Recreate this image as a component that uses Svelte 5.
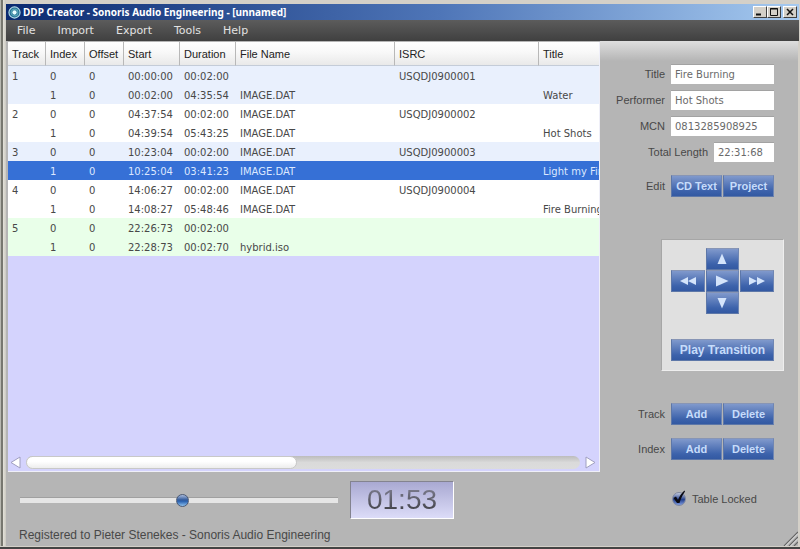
<script lang="ts">
  type Row = {
    track: string
    index: number
    offset: number
    start: string
    duration: string
    file: string
    isrc: string
    title: string
    tone: string
  }

  const columns = ['Track', 'Index', 'Offset', 'Start', 'Duration', 'File Name', 'ISRC', 'Title']
  const menus = ['File', 'Import', 'Export', 'Tools', 'Help']

  const rows: Row[] = [
    { track: '1', index: 0, offset: 0, start: '00:00:00', duration: '00:02:00', file: '', isrc: 'USQDJ0900001', title: '', tone: 'blue' },
    { track: '', index: 1, offset: 0, start: '00:02:00', duration: '04:35:54', file: 'IMAGE.DAT', isrc: '', title: 'Water', tone: 'blue' },
    { track: '2', index: 0, offset: 0, start: '04:37:54', duration: '00:02:00', file: 'IMAGE.DAT', isrc: 'USQDJ0900002', title: '', tone: 'white' },
    { track: '', index: 1, offset: 0, start: '04:39:54', duration: '05:43:25', file: 'IMAGE.DAT', isrc: '', title: 'Hot Shots', tone: 'white' },
    { track: '3', index: 0, offset: 0, start: '10:23:04', duration: '00:02:00', file: 'IMAGE.DAT', isrc: 'USQDJ0900003', title: '', tone: 'blue' },
    { track: '', index: 1, offset: 0, start: '10:25:04', duration: '03:41:23', file: 'IMAGE.DAT', isrc: '', title: 'Light my Fire', tone: 'blue' },
    { track: '4', index: 0, offset: 0, start: '14:06:27', duration: '00:02:00', file: 'IMAGE.DAT', isrc: 'USQDJ0900004', title: '', tone: 'white' },
    { track: '', index: 1, offset: 0, start: '14:08:27', duration: '05:48:46', file: 'IMAGE.DAT', isrc: '', title: 'Fire Burning', tone: 'white' },
    { track: '5', index: 0, offset: 0, start: '22:26:73', duration: '00:02:00', file: '', isrc: '', title: '', tone: 'green' },
    { track: '', index: 1, offset: 0, start: '22:28:73', duration: '00:02:70', file: 'hybrid.iso', isrc: '', title: '', tone: 'green' },
  ]

  let selected = $state(5)
  let position = $state(51)
  let locked = $state(true)
  let title = $state('Fire Burning')
  let performer = $state('Hot Shots')
  let mcn = $state('0813285908925')
  let total = $state('22:31:68')
</script>

<div class="window">
  <header class="titlebar">
    <svg class="logo" viewBox="0 0 14 14" aria-hidden="true">
      <circle cx="7" cy="7" r="6" fill="#246c96" stroke="#b4dce6" stroke-width="1.2" />
      <circle cx="7" cy="7" r="3.6" fill="none" stroke="#59a8b5" stroke-width="1.2" />
      <circle cx="7" cy="7" r="2.3" fill="#e9ffff" />
    </svg>
    <h1>DDP Creator - Sonoris Audio Engineering - [unnamed]</h1>
    <div class="controls">
      <button type="button" aria-label="Minimize">
        <svg viewBox="0 0 12 10"><path d="M2 7.5h5" stroke="#111" stroke-width="2" /></svg>
      </button>
      <button type="button" aria-label="Maximize">
        <svg viewBox="0 0 12 10"><path d="M2.5 1.5h7v7h-7zM2 2h8" fill="none" stroke="#111" /></svg>
      </button>
      <button class="close" type="button" aria-label="Close">
        <svg viewBox="0 0 12 10"><path d="M3 2l6 6M9 2l-6 6" stroke="#111" stroke-width="1.5" /></svg>
      </button>
    </div>
  </header>

  <nav class="menubar">
    {#each menus as menu}
      <button type="button">{menu}</button>
    {/each}
  </nav>

  <div class="body">
    <main>
      <div class="tracks">
        <div class="viewport">
          <table>
            <colgroup>
              <col class="w-track" />
              <col class="w-index" />
              <col class="w-index" />
              <col class="w-time" />
              <col class="w-time" />
              <col class="w-file" />
              <col class="w-isrc" />
              <col class="w-title" />
            </colgroup>
            <thead>
              <tr>
                {#each columns as column}
                  <th scope="col">{column}</th>
                {/each}
              </tr>
            </thead>
            <tbody>
              {#each rows as row, i}
                <tr class={row.tone} class:selected={selected === i} onclick={() => (selected = i)}>
                  <td>{row.track}</td>
                  <td>{row.index}</td>
                  <td>{row.offset}</td>
                  <td>{row.start}</td>
                  <td>{row.duration}</td>
                  <td>{row.file}</td>
                  <td>{row.isrc}</td>
                  <td>{row.title}</td>
                </tr>
              {/each}
            </tbody>
          </table>
        </div>
        <div class="scrollbar">
          <button type="button" aria-label="Scroll left">
            <svg viewBox="0 0 11 12"><path d="M10 0.500v11L1 6z" fill="#fff" stroke="#a09fc0" /></svg>
          </button>
          <div class="groove"><div class="grip"></div></div>
          <button type="button" aria-label="Scroll right">
            <svg viewBox="0 0 11 12"><path d="M1 0.500v11L10 6z" fill="#fff" stroke="#a09fc0" /></svg>
          </button>
        </div>
      </div>

      <div class="transport">
        <input class="seek" type="range" min="0" max="100" aria-label="Position" bind:value={position} />
        <output class="clock"><span>01:53</span></output>
      </div>
      <p class="registered">Registered to Pieter Stenekes - Sonoris Audio Engineering</p>
    </main>

    <aside>
      <div class="fields">
        <div class="field">
          <label for="title">Title</label>
          <input id="title" type="text" bind:value={title} />
        </div>
        <div class="field">
          <label for="performer">Performer</label>
          <input id="performer" type="text" bind:value={performer} />
        </div>
        <div class="field">
          <label for="mcn">MCN</label>
          <input id="mcn" type="text" bind:value={mcn} />
        </div>
        <div class="field">
          <label for="total">Total Length</label>
          <input id="total" class="short" type="text" bind:value={total} />
        </div>
      </div>

      <div class="field edit">
        <span>Edit</span>
        <div class="pair">
          <button class="btn" type="button">CD Text</button>
          <button class="btn" type="button">Project</button>
        </div>
      </div>

      <div class="player">
        <div class="pad">
          <button class="btn up" type="button" aria-label="Previous index">
            <svg viewBox="0 0 16 12"><path d="M8 0.500L12.500 11h-9z" /></svg>
          </button>
          <button class="btn rewind" type="button" aria-label="Rewind">
            <svg viewBox="0 0 16 12"><path d="M8 2v8L0 6zM16 2v8L8 6z" /></svg>
          </button>
          <button class="btn" type="button" aria-label="Play">
            <svg viewBox="0 0 16 12"><path d="M2 0.500v11L14.500 6z" /></svg>
          </button>
          <button class="btn" type="button" aria-label="Fast forward">
            <svg viewBox="0 0 16 12"><path d="M0 2v8l8-4zM8 2v8l8-4z" /></svg>
          </button>
          <button class="btn down" type="button" aria-label="Next index">
            <svg viewBox="0 0 16 12"><path d="M8 11.500L12.500 1h-9z" /></svg>
          </button>
        </div>
        <button class="btn wide" type="button">Play Transition</button>
      </div>

      <div class="lists">
        <div class="field">
          <span>Track</span>
          <div class="pair">
            <button class="btn" type="button">Add</button>
            <button class="btn" type="button">Delete</button>
          </div>
        </div>
        <div class="field">
          <span>Index</span>
          <div class="pair">
            <button class="btn" type="button">Add</button>
            <button class="btn" type="button">Delete</button>
          </div>
        </div>
      </div>

      <label class="lock">
        <span class="box">
          <input type="checkbox" bind:checked={locked} />
          {#if locked}
            <svg viewBox="0 0 14 16" aria-hidden="true">
              <path d="M1.500 8L4 6.500l2 3.500C7.500 6 9.500 3 12.500 0.500L13 1.500C10.500 5 8.500 9.500 7.500 13H5z" fill="#0a0a14" />
            </svg>
          {/if}
        </span>
        Table Locked
      </label>

      <svg class="resize" viewBox="0 0 15 15" aria-hidden="true">
        <path d="M1 15L15 1M6 15l9-9M11 15l4-4" stroke="#666" stroke-width="1.2" />
        <path d="M2.500 15L15 2.500M7.500 15l7.500-7.500" stroke="#e4e4e4" />
      </svg>
    </aside>
  </div>
</div>

<style>
  :global(body) {
    margin: 0;
    background: #b5b5b5;
  }

  .window {
    display: flex;
    flex-direction: column;
    min-height: 100vh;
    box-sizing: border-box;
    padding: 4px 1px 3px 6px;
    background:
      linear-gradient(0deg, #444 2px, #d4d0c8 2px, #d4d0c8 3px, transparent 3px),
      linear-gradient(90deg, #b8b8b0 1px, #77776f 1px, #77776f 3px, #e4e2da 3px, #cbc9c1 6px, transparent 6px),
      #d4d0c8;
    color: #484848;
    font-family: 'Liberation Sans', Arial, sans-serif;
    font-size: 11px;
  }

  button,
  input {
    margin: 0;
    padding: 0;
    border: 0;
    border-radius: 0;
    font: inherit;
    color: inherit;
    box-sizing: border-box;
  }

  .titlebar {
    display: flex;
    align-items: center;
    height: 16px;
    padding: 0 2px 0 2px;
    background: linear-gradient(90deg, #0b2a70, #4f76b8 55%, #a6caf0);
  }

  .logo {
    width: 13px;
    height: 13px;
  }

  h1 {
    flex: 1;
    margin: 0 0 0 2px;
    color: #fff;
    font-family: 'Noto Sans', 'Open Sans', sans-serif;
    font-size: 10px;
    line-height: 14px;
    font-weight: 700;
    white-space: nowrap;
  }

  .controls {
    display: flex;
  }

  .controls button {
    display: flex;
    width: 14px;
    height: 12px;
    background: #d4d0c8;
    border: 1px solid;
    border-color: #fff #404040 #404040 #fff;
  }

  .controls svg {
    width: 12px;
    height: 10px;
  }

  .controls .close {
    margin-left: 2px;
  }

  .menubar {
    display: flex;
    gap: 22px;
    height: 21px;
    padding: 0 11px;
    background: linear-gradient(#5c5c5c, #404040);
  }

  .menubar button {
    background: none;
    color: #e2e2e2;
    font-family: 'DejaVu Sans', Verdana, sans-serif;
    font-size: 11px;
  }

  .body {
    flex: 1;
    display: grid;
    grid-template-columns: minmax(0, 1fr) 199px;
    background: #b5b5b5;
  }

  main {
    display: flex;
    flex-direction: column;
    padding: 1px 0 3px 2px;
  }

  .tracks {
    flex: 1;
    display: flex;
    flex-direction: column;
    background: #d4d3fd;
    border-bottom: 1px solid #efeff8;
    border-right: 1px solid #efeff8;
  }

  .viewport {
    flex: 1;
    overflow: hidden;
  }

  table {
    width: 1200px;
    table-layout: fixed;
    border-collapse: separate;
    border-spacing: 0;
  }

  .w-track {
    width: 38px;
  }

  .w-index {
    width: 39px;
  }

  .w-time {
    width: 56px;
  }

  .w-file {
    width: 159px;
  }

  .w-isrc {
    width: 144px;
  }

  th {
    height: 24px;
    padding: 0 0 0 4px;
    box-sizing: border-box;
    background: linear-gradient(#fff, #f8f8f8 45%, #e9e9e9);
    border-right: 1px solid #b8b8b8;
    border-bottom: 1px solid #c4ccd8;
    color: #222;
    font-weight: 400;
    text-align: left;
  }

  td {
    height: 19px;
    padding: 2px 0 0 4px;
    box-sizing: border-box;
    font-family: 'DejaVu Sans', Verdana, sans-serif;
    font-size: 10px;
    line-height: 17px;
    white-space: nowrap;
  }

  .blue {
    background: #e9f0fd;
  }

  .white {
    background: #fff;
  }

  .green {
    background: #e9ffe9;
  }

  .selected {
    background: #3670d6;
    color: #dce8ff;
  }

  .scrollbar {
    display: flex;
    align-items: center;
    gap: 5px;
    height: 17px;
    padding: 0 3px 0 2px;
  }

  .scrollbar button {
    display: flex;
    background: none;
  }

  .scrollbar svg {
    width: 11px;
    height: 13px;
  }

  .groove {
    flex: 1;
    height: 13px;
    border-radius: 7px;
    background: linear-gradient(#bcbcbc, #dadada 50%, #dcdcdc);
  }

  .grip {
    width: 49%;
    height: 13px;
    box-sizing: border-box;
    border: 1px solid #c8c8c8;
    border-radius: 7px;
    background: linear-gradient(#fff 40%, #ededed);
  }

  .transport {
    display: flex;
    align-items: center;
    gap: 12px;
    padding: 9px 146px 8px 12px;
  }

  .seek {
    flex: 1;
    min-width: 0;
    height: 14px;
    appearance: none;
    background: none;
  }

  .seek::-webkit-slider-runnable-track {
    height: 6px;
    background: #e6e6e6;
    border-top: 1px solid #a0a0a0;
  }

  .seek::-webkit-slider-thumb {
    appearance: none;
    width: 13px;
    height: 13px;
    margin-top: -4px;
    box-sizing: border-box;
    border: 1px solid #4c5a75;
    border-radius: 50%;
    background: linear-gradient(#a9bbdc, #315a9c 45%, #2f67b4 60%, #8fc2ef);
  }

  .clock {
    width: 104px;
    height: 38px;
    box-sizing: border-box;
    border: 1px solid;
    border-color: #83838f #fff #fff #83838f;
    background: linear-gradient(#a9a9d2, #dcdcf8);
    font-size: 28px;
    line-height: 36px;
    text-align: center;
  }

  .clock span {
    background: linear-gradient(#85859a, #48484f 80%);
    background-clip: text;
    color: transparent;
  }

  .registered {
    margin: 0;
    padding-left: 11px;
    font-size: 12px;
    line-height: 16px;
  }

  aside {
    position: relative;
    display: flex;
    flex-direction: column;
    padding: 23px 24px 0 0;
    background: linear-gradient(#dedede, #b5b5b5 20px);
    border-right: 1px solid #d4d0c8;
  }

  .fields {
    display: flex;
    flex-direction: column;
    gap: 6px;
  }

  .field {
    display: flex;
    align-items: center;
    justify-content: flex-end;
    gap: 6px;
  }

  .field input {
    width: 103px;
    height: 20px;
    padding: 0 4px;
    background: #fff;
    color: #6a6a6a;
    border-top: 1px solid #a2a2a2;
    font-family: 'DejaVu Sans', Verdana, sans-serif;
    font-size: 10px;
  }

  .field .short {
    width: 60px;
  }

  .pair {
    display: flex;
    gap: 1px;
    width: 103px;
  }

  .btn {
    display: flex;
    flex: 1;
    align-items: center;
    justify-content: center;
    height: 22px;
    border: 1px solid;
    border-color: #8795b5 #6f86b3 #5d77a8 #5d77a8;
    background: linear-gradient(#8099cc, #3c62ab 75%, #3359a2);
    color: #c6dcfb;
    font-weight: 700;
  }

  .btn svg {
    width: 16px;
    height: 12px;
    fill: #d4e4fb;
  }

  .edit {
    margin-top: 13px;
  }

  .player {
    align-self: flex-end;
    width: 123px;
    height: 132px;
    box-sizing: border-box;
    margin: 42px -10px 0 0;
    padding: 8px 9px;
    background: #e0e0e0;
    border: 1px solid;
    border-color: #a6a6a6 #eee #eee #a6a6a6;
  }

  .pad {
    display: grid;
    grid-template-columns: repeat(3, 1fr);
    column-gap: 1px;
  }

  .up,
  .down {
    grid-column: 2;
  }

  .rewind {
    grid-column: 1;
  }

  .wide {
    width: 100%;
    margin-top: 25px;
    font-size: 12px;
  }

  .lists {
    display: flex;
    flex-direction: column;
    gap: 13px;
    margin-top: 32px;
  }

  .lock {
    display: flex;
    align-items: center;
    gap: 6px;
    margin: 32px 0 0 72px;
  }

  .box {
    position: relative;
    display: flex;
  }

  .box input {
    width: 14px;
    height: 14px;
    appearance: none;
    border: 1px solid #8088a0;
    border-radius: 50%;
    background: linear-gradient(#c3cbe0, #223f8c 55%, #7e9be0);
  }

  .box svg {
    position: absolute;
    left: 0;
    top: -2px;
    width: 14px;
    height: 16px;
    pointer-events: none;
  }

  .resize {
    position: absolute;
    right: 0;
    bottom: 0;
    width: 15px;
    height: 15px;
  }
</style>
